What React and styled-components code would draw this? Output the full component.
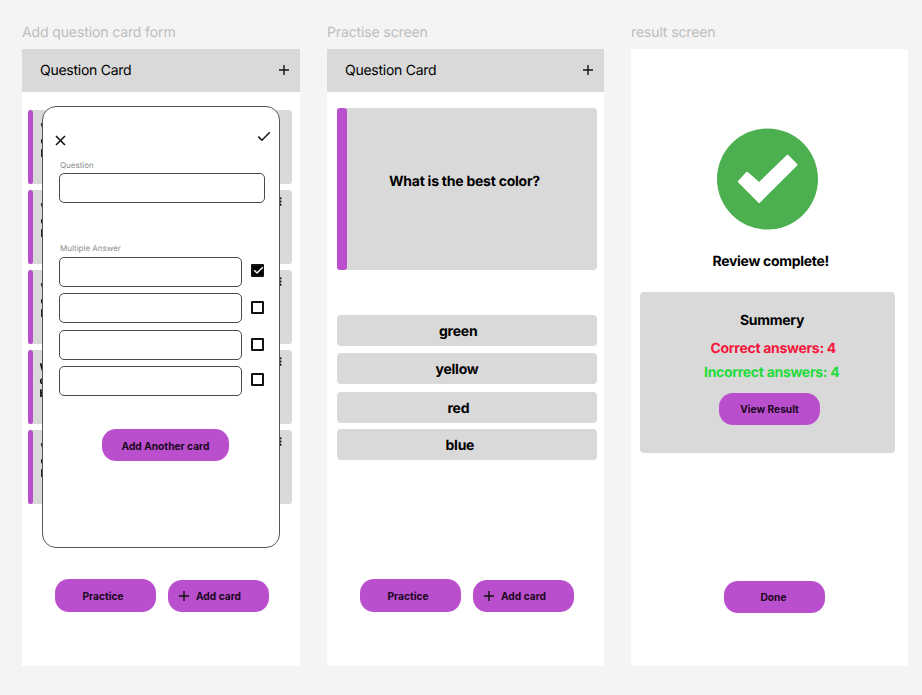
import React from "react";
import styled, { createGlobalStyle } from "styled-components";

const GlobalStyle = createGlobalStyle`
  * { box-sizing: border-box; }
  body {
    margin: 0;
    background: #f4f4f4;
    font-family: Inter, "Liberation Sans", sans-serif;
    color: #000;
    text-rendering: geometricPrecision;
  }
  svg { display: block; flex: none; }
`;

const Canvas = styled.main`
  display: flex;
  gap: 27px;
  width: 922px;
  height: 695px;
  padding: 23px 0 0 22px;
  overflow: hidden;
`;

const Frame = styled.section`
  flex: none;
  width: ${(p) => p.$width || 277}px;
`;

const FrameTitle = styled.h2`
  height: 26px;
  margin: 0;
  font-size: 14px;
  font-weight: 400;
  line-height: 20px;
  letter-spacing: -0.12px;
  color: #bdbdbd;
  white-space: nowrap;
`;

const Screen = styled.div`
  position: relative;
  display: flex;
  flex-direction: column;
  height: 617px;
  background: #fff;
`;

const TopBar = styled.header`
  display: flex;
  align-items: center;
  justify-content: space-between;
  height: 43px;
  padding: 0 11px 2px 18px;
  background: #d9d9d9;
`;

const TopTitle = styled.h1`
  margin: 0;
  padding-top: 2px;
  font-size: 14px;
  font-weight: 400;
  line-height: 18px;
  letter-spacing: -0.26px;
`;

const CardList = styled.div`
  display: flex;
  flex-direction: column;
  gap: 6px;
  height: 487px;
  padding: 18px 8px 0 6px;
`;

const MiniCard = styled.article`
  display: flex;
  height: 74px;
  border-radius: 3px;
  background: #d9d9d9;
`;

const Accent = styled.div`
  flex: none;
  width: ${(p) => p.$width}px;
  border-radius: 3px;
  background: #ba4fce;
`;

const MiniText = styled.p`
  flex: 1;
  margin: 0;
  padding: 11px 0 0 ${(p) => p.$indent}px;
  font-size: 10.5px;
  font-weight: 700;
  line-height: 13px;
  white-space: pre-line;
  will-change: transform;
`;

const MiniMenu = styled.div`
  padding: 7px 10px 0 0;
`;

const Modal = styled.div`
  position: absolute;
  top: 57px;
  left: 20px;
  width: 238px;
  height: 442px;
  padding: 24px 14px 0 16px;
  border: 1px solid #555;
  border-radius: 14px;
  background: #fff;
`;

const ModalActions = styled.div`
  display: flex;
  justify-content: space-between;
  height: 29px;
  padding-right: 6px;
  margin-left: -4px;
  margin-right: -12px;
`;

const CloseSlot = styled.div`
  padding-top: 3px;
`;

const Label = styled.div`
  height: ${(p) => p.$height || 13}px;
  font-size: 8px;
  line-height: 10px;
  color: #8c8c8c;
  padding-left: 1px;
`;

const Field = styled.div`
  width: ${(p) => p.$width}px;
  height: 30px;
  border: 1px solid #4a4a4a;
  border-radius: 5px;
  background: #fff;
`;

const Answers = styled.div`
  display: grid;
  grid-template-columns: 183px 13px;
  grid-template-rows: 36px 37px 36px 36px;
  column-gap: 9px;
`;

const Question = styled.div`
  height: 83px;
`;

const Tick = styled.div`
  display: grid;
  place-items: center;
  width: 13px;
  height: 13px;
  margin-top: ${(p) => p.$top}px;
  border: 2px solid #111;
  border-radius: 1px;
  background: ${(p) => (p.$on ? "#000" : "#fff")};
`;

const ModalFooter = styled.div`
  display: flex;
  padding: 27px 0 0 43px;
`;

const Button = styled.button`
  display: flex;
  align-items: center;
  justify-content: ${(p) => (p.$left ? "flex-start" : "center")};
  gap: 7px;
  flex: none;
  width: ${(p) => p.$width || 101}px;
  height: ${(p) => p.$height || 32}px;
  margin: 0;
  padding: ${(p) => p.$drop || 0}px ${(p) => p.$padRight || 0}px 0 ${(p) => p.$left || 0}px;
  border: 0;
  border-radius: 14px;
  background: #ba4fce;
  color: #1b0720;
  font: 700 10.2px/14px Inter, "Liberation Sans", sans-serif;
  white-space: nowrap;
`;

const BottomBar = styled.footer`
  display: flex;
  gap: 12px;
  padding-left: 33px;
`;

const AddSlot = styled.div`
  padding-top: 1px;
`;

const PracticeBody = styled.div`
  height: 487px;
  padding: 16px 7px 0 10px;
`;

const QuestionCard = styled.article`
  display: flex;
  align-items: center;
  height: 162px;
  margin-bottom: 45px;
  border-radius: 4px;
  background: #d9d9d9;
`;

const TallAccent = styled(Accent)`
  height: 162px;
`;

const Strong = styled.p`
  margin: 0;
  font-size: 14px;
  font-weight: 700;
  line-height: 20px;
  letter-spacing: -0.24px;
  white-space: nowrap;
  color: ${(p) => p.$color || "#000"};
`;

const QuestionText = styled(Strong)`
  padding: 0 0 15px 42px;
`;

const OptionList = styled.div`
  display: grid;
  grid-template-rows: 38px 39px 37px 31px;
`;

const Option = styled.div`
  height: 31px;
  padding: 7px 0 0 ${(p) => p.$indent}px;
  border-radius: 4px;
  background: #d9d9d9;
`;

const ResultBody = styled.div`
  display: flex;
  flex-direction: column;
  align-items: flex-start;
  height: 532px;
  padding: 79px 0 0 9px;
`;

const BadgeSlot = styled.div`
  padding: 0 0 22px 76px;
`;

const ReviewText = styled(Strong)`
  padding-left: 72.5px;
  margin-bottom: 20px;
  letter-spacing: -0.3px;
`;

const Summary = styled.section`
  width: 255px;
  height: 161px;
  padding-top: 19px;
  border-radius: 4px;
  background: #d9d9d9;
`;

const SummaryLine = styled(Strong)`
  height: ${(p) => p.$height}px;
  padding-left: ${(p) => p.$indent}px;
  letter-spacing: -0.3px;
`;

const SummaryAction = styled.div`
  padding-left: 79px;
`;

const DoneSlot = styled.div`
  padding-left: 93px;
`;

const Plus = () => (
  <svg width="10" height="10" viewBox="0 0 10 10" stroke="#111" strokeWidth="1.4">
    <path d="M5 0V10M0 5H10" />
  </svg>
);

const Close = () => (
  <svg width="12" height="12" viewBox="0 0 12 12" stroke="#111" strokeWidth="1.5">
    <path d="M1 2L10 11M10 2L1 11" />
  </svg>
);

const Check = () => (
  <svg width="14" height="11" viewBox="0 0 14 11" fill="none" stroke="#111" strokeWidth="1.5">
    <path d="M1.3 5.6L4.9 9.2L12.8 1.3" />
  </svg>
);

const SmallCheck = () => (
  <svg width="11" height="9" viewBox="0 0 11 9" fill="none" stroke="#fff" strokeWidth="1.4">
    <path d="M1.2 4.3L4 7.1L9.8 1.3" />
  </svg>
);

const Kebab = () => (
  <svg width="3" height="9" viewBox="0 0 3 9" fill="#111">
    <circle cx="1.5" cy="1.3" r="1.1" />
    <circle cx="1.5" cy="4.5" r="1.1" />
    <circle cx="1.5" cy="7.7" r="1.1" />
  </svg>
);

const SuccessBadge = () => (
  <svg width="102" height="102" viewBox="0 0 102 102">
    <circle cx="51.5" cy="51" r="50.5" fill="#4caf50" />
    <path
      d="M22.8 53.6L31 44.8L43.2 55.2L71.6 27.8L80.5 36.8L43.2 74Z"
      fill="#fff"
      stroke="#fff"
      strokeWidth="2"
      strokeLinejoin="round"
    />
  </svg>
);

const cards = [
  { indent: 7.5, menu: false },
  { indent: 7.5, menu: true },
  { indent: 7.5, menu: true },
  { indent: 6.5, menu: true },
  { indent: 7.5, menu: true },
];

const ticks = [
  { on: true, top: 7 },
  { on: false, top: 8 },
  { on: false, top: 8 },
  { on: false, top: 7 },
];

const options = [
  { text: "green", indent: 102 },
  { text: "yellow", indent: 98.5 },
  { text: "red", indent: 110.5 },
  { text: "blue", indent: 108.5 },
];

const Header = () => (
  <TopBar>
    <TopTitle>Question Card</TopTitle>
    <Plus />
  </TopBar>
);

const Footer = () => (
  <BottomBar>
    <Button $height={33} $padRight={5}>Practice</Button>
    <AddSlot>
      <Button $left={11}>
        <Plus />
        Add card
      </Button>
    </AddSlot>
  </BottomBar>
);

export default function App() {
  return (
    <>
      <GlobalStyle />
      <Canvas>
        <Frame $width={278}>
          <FrameTitle>Add question card form</FrameTitle>
          <Screen>
            <Header />
            <CardList>
              {cards.map((card, i) => (
                <MiniCard key={i}>
                  <Accent $width={5} />
                  <MiniText $indent={card.indent}>{"What\ncolor\nbest"}</MiniText>
                  {card.menu && (
                    <MiniMenu>
                      <Kebab />
                    </MiniMenu>
                  )}
                </MiniCard>
              ))}
            </CardList>
            <Footer />
            <Modal>
              <ModalActions>
                <CloseSlot>
                  <Close />
                </CloseSlot>
                <Check />
              </ModalActions>
              <Question>
                <Label>Question</Label>
                <Field $width={206} />
              </Question>
              <Label $height={14}>Multiple Answer</Label>
              <Answers>
                {ticks.map((tick, i) => (
                  <React.Fragment key={i}>
                    <Field $width={183} />
                    <Tick $on={tick.on} $top={tick.top}>
                      {tick.on && <SmallCheck />}
                    </Tick>
                  </React.Fragment>
                ))}
              </Answers>
              <ModalFooter>
                <Button $width={127} $drop={1}>Add Another card</Button>
              </ModalFooter>
            </Modal>
          </Screen>
        </Frame>
        <Frame>
          <FrameTitle>Practise screen</FrameTitle>
          <Screen>
            <Header />
            <PracticeBody>
              <QuestionCard>
                <TallAccent $width={10} />
                <QuestionText>What is the best color?</QuestionText>
              </QuestionCard>
              <OptionList>
                {options.map((option) => (
                  <Option key={option.text} $indent={option.indent}>
                    <Strong>{option.text}</Strong>
                  </Option>
                ))}
              </OptionList>
            </PracticeBody>
            <Footer />
          </Screen>
        </Frame>
        <Frame>
          <FrameTitle>result screen</FrameTitle>
          <Screen>
            <ResultBody>
              <BadgeSlot>
                <SuccessBadge />
              </BadgeSlot>
              <ReviewText>Review complete!</ReviewText>
              <Summary>
                <SummaryLine $height={28} $indent={100}>Summery</SummaryLine>
                <SummaryLine $height={24} $indent={70.5} $color="#f5163b">Correct answers: 4</SummaryLine>
                <SummaryLine $height={30} $indent={64} $color="#21dc3a">Incorrect answers: 4</SummaryLine>
                <SummaryAction>
                  <Button>View Result</Button>
                </SummaryAction>
              </Summary>
            </ResultBody>
            <DoneSlot>
              <Button $padRight={2}>Done</Button>
            </DoneSlot>
          </Screen>
        </Frame>
      </Canvas>
    </>
  );
}
